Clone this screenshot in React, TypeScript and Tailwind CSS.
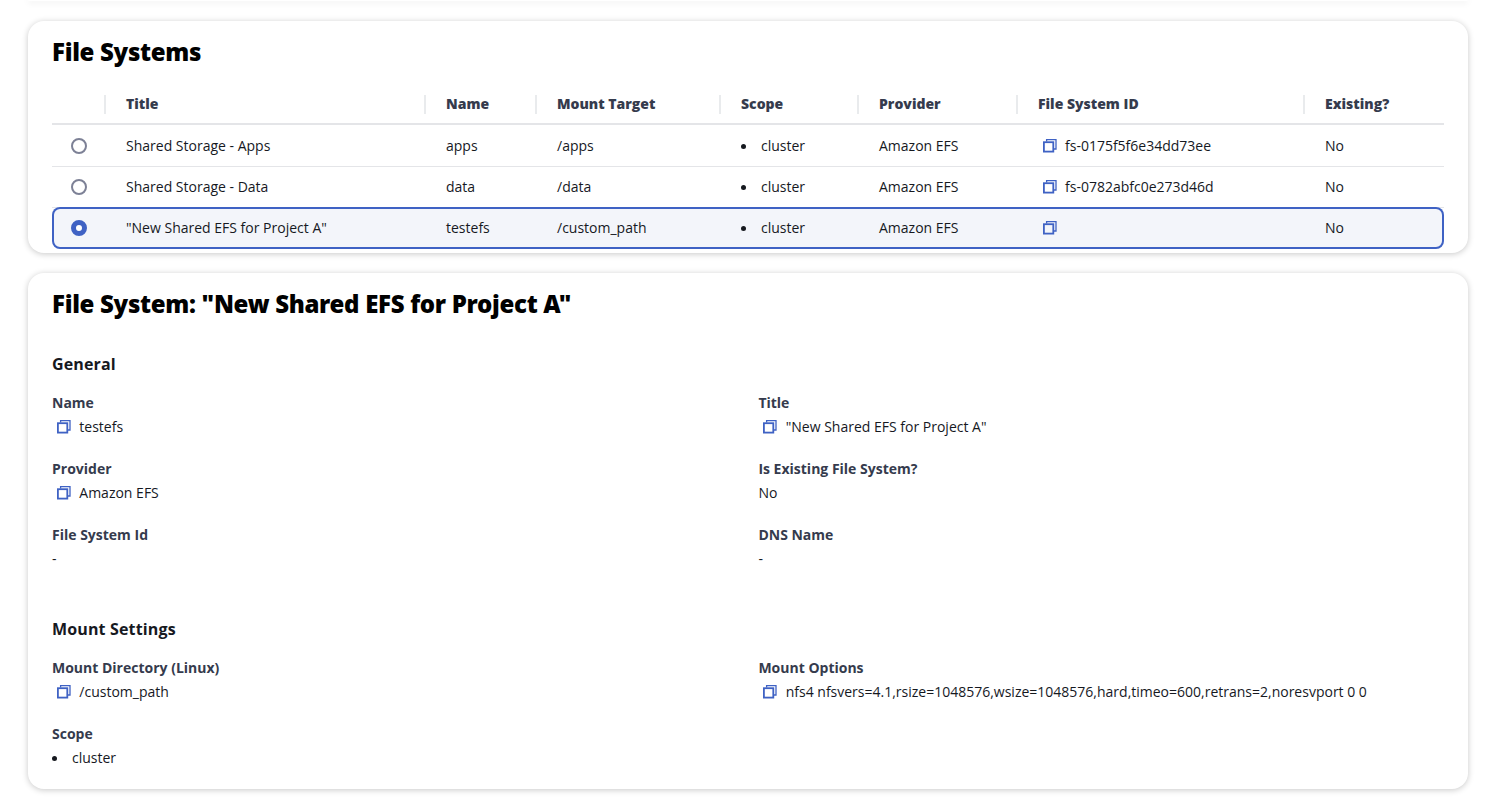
import React from "react";

const cols = "grid grid-cols-[52px_320px_111px_184px_138px_159px_287px_141px]";
const card = "ml-[28px] mr-[18px] bg-white rounded-2xl shadow-[0_1px_6px_rgba(0,0,0,0.22)] px-6";
const title = "text-[24px] leading-8 tracking-[-0.3px] font-black text-black font-['Noto_Sans',sans-serif]";
const detailGrid = "grid grid-cols-[706.4px_1fr]";

const CopyIcon: React.FC = () => (
  <svg width="14" height="14" viewBox="0 0 14 14" fill="none" stroke="#3f62c4" className="shrink-0">
    <rect x="0.9" y="3.2" width="9.4" height="9.4" strokeWidth="1.8" />
    <path d="M3.6 2.4V0.7H13V10H11" strokeWidth="1.3" />
  </svg>
);

const Radio: React.FC<{ checked?: boolean }> = ({ checked }) =>
  checked ? (
    <div className="w-4 h-4 rounded-full border-[5px] border-[#3f62c4] bg-white" />
  ) : (
    <div className="w-4 h-4 rounded-full border-2 border-[#7d8196] bg-white" />
  );

const Dot: React.FC = () => <span className="w-[5px] h-[5px] rounded-full bg-[#16191f] shrink-0" />;

type Row = { title: string; name: string; mount: string; id: string; selected?: boolean };

const rows: Row[] = [
  { title: "Shared Storage - Apps", name: "apps", mount: "/apps", id: "fs-0175f5f6e34dd73ee" },
  { title: "Shared Storage - Data", name: "data", mount: "/data", id: "fs-0782abfc0e273d46d" },
  { title: '"New Shared EFS for Project A"', name: "testefs", mount: "/custom_path", id: "", selected: true },
];

const headers = ["Title", "Name", "Mount Target", "Scope", "Provider", "File System ID", "Existing?"];

const Field: React.FC<{ label: string; value: string; copy?: boolean; bullet?: boolean }> = ({ label, value, copy, bullet }) => (
  <div className="h-[66px]">
    <div className="h-6 flex items-center font-bold text-[#353b4d]">{label}</div>
    <div className="h-6 flex items-center">
      {copy && (
        <span className="ml-[5px] mr-[8.3px] flex">
          <CopyIcon />
        </span>
      )}
      {bullet && (
        <span className="mr-[15px] flex">
          <Dot />
        </span>
      )}
      {value}
    </div>
  </div>
);

export default function App() {
  return (
    <div className="min-h-[805px] bg-white text-[14px] leading-5 text-[#16191f] font-['Open_Sans',sans-serif] overflow-hidden">
      <div className={`${card} h-[1px] rounded-t-none`} />
      <div className={`${card} mt-5 h-[232px]`}>
        <h2 className={`${title} pt-[15px] h-[65px]`}>File Systems</h2>
        <div className={`${cols} h-[39px] pb-px border-b-2 border-[#e4e5e8] items-center`}>
          <div />
          {headers.map((h) => (
            <div key={h} className="h-[19px] flex items-center border-l-2 border-[#e9ebed] pl-5 font-extrabold text-[#353b4d]">
              {h}
            </div>
          ))}
        </div>
        <div className="pt-px">
          {rows.map((r) => (
            <div
              key={r.name}
              className={`${cols} items-center ${
                r.selected
                  ? "h-[42px] -mt-px rounded-lg bg-[#f3f5fa] shadow-[inset_0_0_0_2px_#3f62c4]"
                  : "h-[41px] border-b border-[#e4e5e8]"
              }`}
            >
              <div className="flex pl-[19px]">
                <Radio checked={r.selected} />
              </div>
              <div className="pl-[22px]">{r.title}</div>
              <div className="pl-[22px]">{r.name}</div>
              <div className="pl-[22px]">{r.mount}</div>
              <div className="pl-[22px] flex items-center gap-[15px]">
                <Dot />
                cluster
              </div>
              <div className="pl-[22px]">Amazon EFS</div>
              <div className="pl-[27px] flex items-center gap-[8px]">
                <CopyIcon />
                {r.id}
              </div>
              <div className="pl-[22px]">No</div>
            </div>
          ))}
        </div>
      </div>
      <div className={`${card} mt-5 h-[516px]`}>
        <h2 className={`${title} pt-[15px] h-[66px]`}>File System: "New Shared EFS for Project A"</h2>
        <h3 className="mt-[13px] h-6 flex items-center text-[16px] font-bold tracking-[0.15px] text-[#16191f]">General</h3>
        <div className={`mt-[15px] ${detailGrid}`}>
          <Field label="Name" value="testefs" copy />
          <Field label="Title" value={'"New Shared EFS for Project A"'} copy />
          <Field label="Provider" value="Amazon EFS" copy />
          <Field label="Is Existing File System?" value="No" />
          <Field label="File System Id" value="-" />
          <Field label="DNS Name" value="-" />
        </div>
        <h3 className="mt-[28px] h-6 flex items-center text-[16px] font-bold tracking-[0.15px] text-[#16191f]">Mount Settings</h3>
        <div className={`mt-[15px] ${detailGrid}`}>
          <Field label="Mount Directory (Linux)" value="/custom_path" copy />
          <Field label="Mount Options" value="nfs4 nfsvers=4.1,rsize=1048576,wsize=1048576,hard,timeo=600,retrans=2,noresvport 0 0" copy />
          <Field label="Scope" value="cluster" bullet />
        </div>
      </div>
    </div>
  );
}
